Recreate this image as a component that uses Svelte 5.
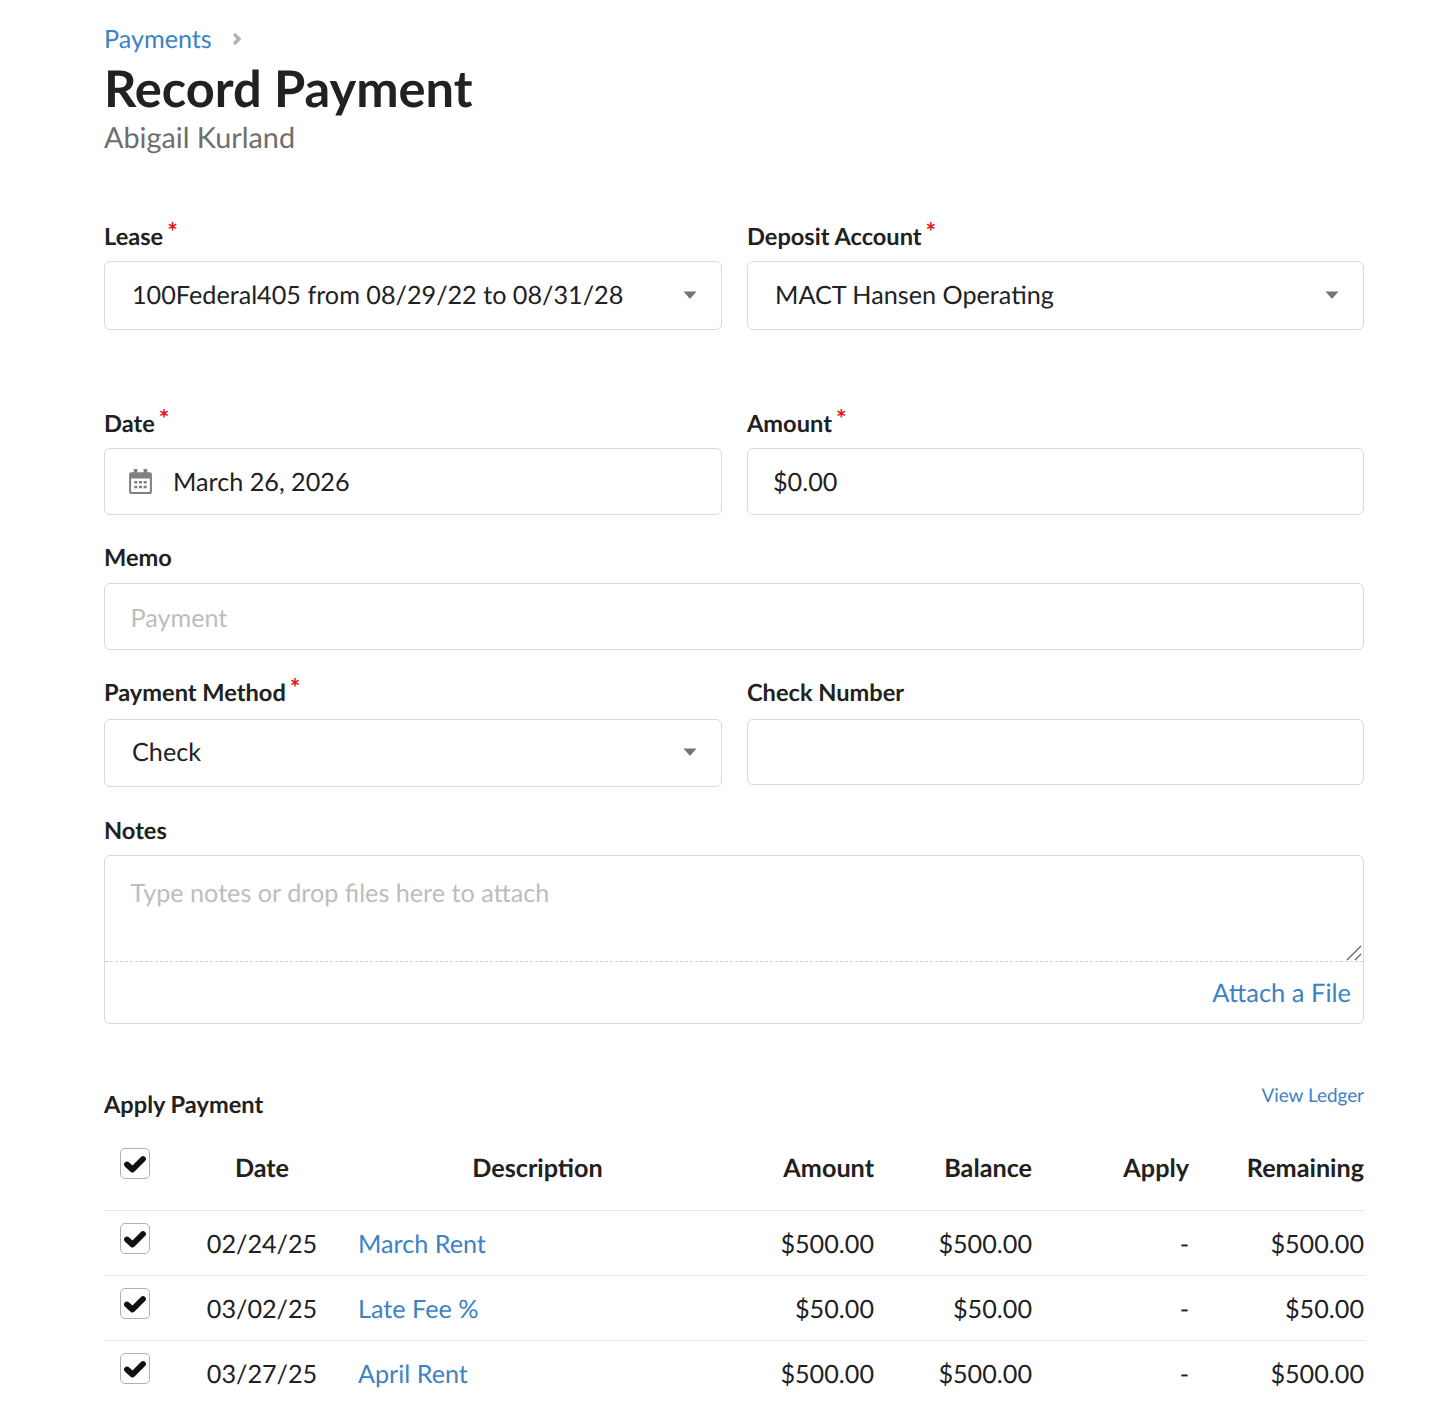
<script>
  const rows = [
    { date: '02/24/25', desc: 'March Rent', amount: '$500.00' },
    { date: '03/02/25', desc: 'Late Fee %', amount: '$50.00' },
    { date: '03/27/25', desc: 'April Rent', amount: '$500.00' }
  ];
</script>

{#snippet caret()}
  <svg class="caret" width="14" height="8" viewBox="0 0 14 8"><path d="M0.500 0.500h13L7.600 7.300a.8.8 0 0 1-1.200 0z" fill="#757575"/></svg>
{/snippet}

{#snippet check()}
  <span class="cb">
    <svg width="24" height="20" viewBox="0 0 24 20"><path d="M4 10.500 9.500 15.500 20 5" fill="none" stroke="#111" stroke-width="5.800" stroke-linejoin="round" stroke-linecap="round"/></svg>
  </span>
{/snippet}

<main class="page">
  <nav class="crumb">
    <a href="#p">Payments</a>
    <svg width="12" height="16" viewBox="0 0 12 16"><path d="M3 3l5 5-5 5" fill="none" stroke="#b3b3b3" stroke-width="3.400"/></svg>
  </nav>
  <h1>Record Payment</h1>
  <p class="sub">Abigail Kurland</p>

  <section class="grid r1">
    <div>
      <label class="lbl tight">Lease<sup>*</sup></label>
      <div class="box sel"><span>100Federal405 from 08/29/22 to 08/31/28</span>{@render caret()}</div>
    </div>
    <div>
      <label class="lbl tight">Deposit Account<sup>*</sup></label>
      <div class="box sel"><span>MACT Hansen Operating</span>{@render caret()}</div>
    </div>
  </section>

  <section class="grid r2">
    <div>
      <label class="lbl low">Date<sup>*</sup></label>
      <div class="box inp date">
        <svg width="25" height="27" viewBox="0 0 24 26">
          <path fill="#808080" fill-rule="evenodd" d="M5.500 1h3.500v3h6V1h3.500v3H21a2 2 0 0 1 2 2v17a2 2 0 0 1-2 2H3a2 2 0 0 1-2-2V6a2 2 0 0 1 2-2h2.500zM3 10v12.500a.5.5 0 0 0 .5.5h17a.5.5 0 0 0 .5-.5V10z"/>
          <path fill="#808080" d="M6 12.500h3V15H6zM10.500 12.500h3V15h-3zM15 12.500h3V15h-3zM6 17h3v2.500H6zM10.500 17h3v2.500h-3zM15 17h3v2.500h-3z"/>
        </svg>
        <span>March 26, 2026</span>
      </div>
    </div>
    <div>
      <label class="lbl low">Amount<sup>*</sup></label>
      <div class="box inp amount">$0.00</div>
    </div>
  </section>

  <section class="r3">
    <label class="lbl">Memo</label>
    <div class="box inp ph">Payment</div>
  </section>

  <section class="grid r3">
    <div>
      <label class="lbl wide">Payment Method<sup>*</sup></label>
      <div class="box sel s68"><span>Check</span>{@render caret()}</div>
    </div>
    <div>
      <label class="lbl wide">Check Number</label>
      <div class="box inp s66"></div>
    </div>
  </section>

  <section class="r4">
    <label class="lbl low">Notes</label>
    <div class="box notes">
      <div class="ta">
        <span class="ph">Type notes or drop files here to attach</span>
        <svg class="grip" width="16" height="16" viewBox="0 0 16 16"><path d="M1 15 15 1M9 15l6-6" stroke="#666" stroke-width="1.400" fill="none"/></svg>
      </div>
      <div class="attach"><a href="#a">Attach a File</a></div>
    </div>
  </section>

  <div class="apply">
    <h2>Apply Payment</h2>
    <a href="#l">View Ledger</a>
  </div>

  <table>
    <thead>
      <tr>
        <th class="c0">{@render check()}</th>
        <th class="c1">Date</th>
        <th class="c2">Description</th>
        <th class="num c3">Amount</th>
        <th class="num c4">Balance</th>
        <th class="num c5">Apply</th>
        <th class="num c6">Remaining</th>
      </tr>
    </thead>
    <tbody>
      {#each rows as r}
        <tr>
          <td class="c0">{@render check()}</td>
          <td class="c1 txt">{r.date}</td>
          <td class="desc txt"><a href="#r">{r.desc}</a></td>
          <td class="num txt">{r.amount}</td>
          <td class="num txt">{r.amount}</td>
          <td class="num txt">-</td>
          <td class="num txt">{r.amount}</td>
        </tr>
      {/each}
    </tbody>
  </table>
</main>

<style>
  :global(body) { margin: 0; background: #fff; }
  .page {
    box-sizing: border-box;
    width: 1456px;
    height: 1402px;
    overflow: hidden;
    padding: 23px 92px 0 104px;
    font-family: Lato, sans-serif;
    font-size: 25.2px;
    color: #212121;
    text-rendering: geometricPrecision;
  }
  a { color: #3d82c4; text-decoration: none; }
  .crumb { display: flex; align-items: center; gap: 19px; height: 32px; line-height: 32px; }
  h1 { margin: 1px 0 0; font-size: 50.6px; line-height: 64px; font-weight: 700; }
  .sub { margin: 1px 0 0; font-size: 28.8px; line-height: 34px; color: #6e6e6e; }
  .grid { display: grid; grid-template-columns: 618px 617px; column-gap: 25px; }
  .r1 { margin-top: 67px; }
  .r2 { margin-top: 78px; }
  .r3 { margin-top: 28px; }
  .r4 { margin-top: 28px; }
  .lbl { display: block; height: 30px; line-height: 30px; margin-bottom: 10px; font-size: 23.6px; font-weight: 700; }
  .low { line-height: 32px; }
  .tight { margin-bottom: 9px; }
  .wide { margin-bottom: 11px; }
  sup { color: #e0161d; font-size: 25px; line-height: 0; margin-left: 4px; vertical-align: 4px; font-weight: 700; }
  .box { box-sizing: border-box; border: 1px solid #d9d9d9; border-radius: 6px; background: #fff; }
  .sel { height: 69px; display: flex; align-items: center; justify-content: space-between; padding: 0 24px 2px 27px; }
  .s68 { height: 68px; }
  .inp { height: 67px; display: flex; align-items: center; padding: 0 26px; }
  .inp.ph { padding: 2px 27px 0 25.500px; }
  .s66 { height: 66px; }
  .date { gap: 20px; padding-left: 23px; }
  .amount { padding-left: 25px; }
  .ph { color: #bdbdbd; }
  .notes { height: 169px; }
  .ta { position: relative; box-sizing: border-box; height: 106px; padding: 21px 25.500px 0; line-height: 32px; border-bottom: 1px dashed #d2d2d2; }
  .grip { position: absolute; right: 1px; bottom: 0; }
  .attach { display: flex; justify-content: flex-end; padding: 15px 12px 0 0; line-height: 32px; }
  .attach a { font-size: 25.5px; }
  .apply { display: flex; justify-content: space-between; align-items: flex-start; margin-top: 55px; height: 61px; }
  h2 { margin: 11px 0 0; font-size: 23.6px; line-height: 30px; font-weight: 700; }
  .apply a { font-size: 18.9px; line-height: 26px; margin-top: 4px; }
  table { width: 1260px; border-collapse: collapse; table-layout: fixed; }
  th { font-weight: 700; height: 70px; padding: 0 0 14px; box-sizing: border-box; font-size: 25.2px; }
  td { height: 65px; padding: 0; box-sizing: border-box; border-top: 1px solid #e6e6e6; }
  td.txt { padding-top: 2px; }
  .c0 { width: 88px; text-align: left; }
  th.c0, td.c0 { padding-left: 16px; }
  .c1 { width: 140px; text-align: center; }
  .c2 { width: 411px; text-align: center; }
  th.c3 { width: 131px; }
  th.c4 { width: 158px; }
  th.c5 { width: 157px; }
  .num { text-align: right; }
  .desc { padding-left: 26px; }
  .cb {
    display: flex; align-items: center; justify-content: center;
    box-sizing: border-box; width: 30px; height: 31px;
    border: 1px solid #b0b0b0; border-radius: 5px;
    transform: translateY(-4px);
  }
</style>
